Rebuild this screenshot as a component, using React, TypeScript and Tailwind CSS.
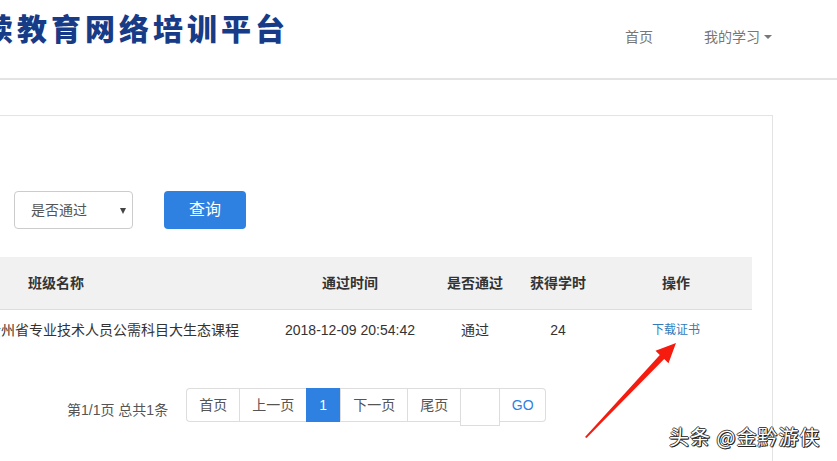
import React from "react";

const FONT = '"Liberation Sans", "Noto Sans CJK SC", sans-serif';

export default function App() {
  return (
    <div
      className="relative w-[837px] h-[461px] overflow-hidden bg-white text-[14px] text-[#333]"
      style={{ fontFamily: FONT }}
    >
      {/* Header */}
      <header className="h-[80px] border-b-2 border-[#e3e3e3] flex items-start">
        <h1
          className="ml-[-51px] mt-[11px] text-[30px] leading-[32px] tracking-[4px] font-black text-[#173b86] whitespace-nowrap"
          style={{ fontFamily: '"Noto Sans CJK SC", serif' }}
        >
          继续教育网络培训平台
        </h1>
        <nav className="ml-auto mr-[65px] mt-[27px] flex items-center text-[14px] leading-[20px] text-[#777]">
          <span className="mr-[51px]">首页</span>
          <span>我的学习</span>
          <span className="ml-[4px] w-0 h-0 border-l-[4px] border-r-[4px] border-t-[4px] border-l-transparent border-r-transparent border-t-[#777]" />
        </nav>
      </header>

      {/* Panel */}
      <main className="mt-[35px] w-[773px] h-[400px] border-t border-r border-[#e3e3e3]">
        {/* Filters */}
        <div className="mt-[75px] pl-[14px] flex items-center gap-[31px]">
          <div className="relative w-[119px] h-[38px] rounded-[4px] border border-[#ccc] flex items-center pl-[16px] text-[14px] text-[#555]">
            是否通过
            <span className="absolute right-[6px] top-[16px] w-0 h-0 border-l-[3.5px] border-r-[3.5px] border-t-[6px] border-l-transparent border-r-transparent border-t-[#444]" />
          </div>
          <button className="w-[82px] h-[38px] rounded-[4px] bg-[#2e80e1] text-white text-[16px]">
            查询
          </button>
        </div>

        {/* Table */}
        <div className="mt-[28px] w-[752px]">
          <div className="h-[53px] bg-[#f1f1f1] border-b border-[#ddd] flex items-center font-bold text-[#333] text-[14px]">
            <div className="w-[283px] pl-[28px]">班级名称</div>
            <div className="w-[134px] flex justify-center whitespace-nowrap">通过时间</div>
            <div className="w-[116px] flex justify-center whitespace-nowrap">是否通过</div>
            <div className="w-[50px] flex justify-center whitespace-nowrap">获得学时</div>
            <div className="w-[17px]" />
            <div className="w-[152px] flex justify-center">操作</div>
          </div>
          <div className="h-[40px] flex items-center text-[14px] text-[#333]">
            <div className="w-[283px] whitespace-nowrap">
              <span className="ml-[-13px]">贵州省专业技术人员公需科目大生态课程</span>
            </div>
            <div className="w-[134px] flex justify-center whitespace-nowrap">2018-12-09 20:54:42</div>
            <div className="w-[116px] flex justify-center">通过</div>
            <div className="w-[50px] flex justify-center">24</div>
            <div className="w-[17px]" />
            <div className="w-[152px] flex justify-center text-[12px] text-[#337ab7]">下载证书</div>
          </div>
        </div>

        {/* Pagination */}
        <div className="mt-[38px] pl-[67px] flex items-start text-[14px] text-[#555]">
          <span className="mt-[13px] leading-[18px] mr-[18px] whitespace-nowrap">第1/1页 总共1条</span>
          <div className="flex items-start">
            <div className="w-[53px] h-[34px] flex items-center justify-center border border-r-0 border-[#ddd] rounded-l-[4px] text-[#555]">首页</div>
            <div className="w-[67px] h-[34px] flex items-center justify-center border border-r-0 border-[#ddd] text-[#555]">上一页</div>
            <div className="w-[34px] h-[34px] flex items-center justify-center bg-[#2e80e1] text-white">1</div>
            <div className="w-[67px] h-[34px] flex items-center justify-center border border-r-0 border-[#ddd] text-[#555]">下一页</div>
            <div className="w-[53px] h-[34px] flex items-center justify-center border border-r-0 border-[#ddd] text-[#555]">尾页</div>
            <div className="w-[40px] h-[38px] border border-[#ddd] bg-white" />
            <div className="w-[46px] h-[34px] flex items-center justify-center border border-l-0 border-[#ddd] rounded-r-[4px] text-[#2e80e1]">GO</div>
          </div>
        </div>
      </main>

      {/* Red arrow annotation */}
      <svg className="absolute left-0 top-0 pointer-events-none" width="837" height="461">
        <polygon
          points="585,437 659.8,354.9 655.5,350.7 676,343 668.5,363.3 664.2,359.1 586.5,438"
          fill="#f51b0f"
        />
      </svg>

      {/* Watermark */}
      <div
        className="absolute left-[669px] top-[424px] text-[20px] leading-[26px] tracking-[1px] text-white whitespace-nowrap"
        style={{
          fontFamily: '"Noto Sans CJK SC", sans-serif',
          textShadow:
            "1px 1px 0 #222, -1px 0 0 #444, 0 -1px 0 #444, 1px 0 0 #333, 0 1px 0 #333",
        }}
      >
        头条 @金黔游侠
      </div>
    </div>
  );
}
